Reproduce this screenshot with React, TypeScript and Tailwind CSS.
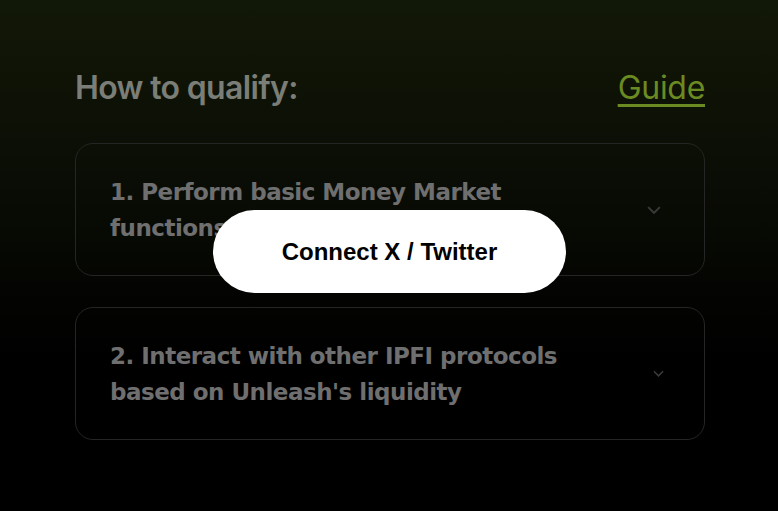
import React from "react";

const steps = [
  { text: "1. Perform basic Money Market functions", chevron: "w-[14px] h-[14px] mr-[3px]" },
  { text: "2. Interact with other IPFI protocols based on Unleash's liquidity", chevron: "w-[11px] h-[11px] mr-0" },
];

const Chevron: React.FC<{ className: string }> = ({ className }) => (
  <svg className={className} viewBox="0 0 12 12" fill="none" stroke="#3a3a3a" strokeWidth="1.7">
    <path d="M1 3.5 L6 8.5 L11 3.5" />
  </svg>
);

const App: React.FC = () => {
  return (
    <div className="relative w-[778px] h-[511px] overflow-hidden bg-[linear-gradient(180deg,#121807_0%,#0a0d05_35%,#000000_70%)]">
      <div className="pl-[75px] pr-[73px] pt-[66px] w-full">
        <div className="flex items-center justify-between h-[44px]">
          <h2 className="text-[32px] tracking-[-0.65px] text-[#7b7e76] font-['Inter',sans-serif] font-semibold">How to qualify:</h2>
          <a className="text-[32px] tracking-[-0.3px] text-[#6b8b22] underline underline-offset-[5px] decoration-[3px] font-['Inter',sans-serif]" href="#">Guide</a>
        </div>
        <div className="mt-[33px] flex flex-col gap-[31px]">
          {steps.map((s) => (
            <div key={s.text} className="flex items-center justify-between h-[133px] border border-[#252525] rounded-[18px] pl-[34px] pr-[40px]">
              <p className="w-[480px] text-[23px] leading-[36px] font-bold text-[#6f6f6f] font-['DejaVu_Sans',sans-serif] tracking-[-0.5px]">{s.text}</p>
              <Chevron className={s.chevron} />
            </div>
          ))}
        </div>
      </div>
      <button className="absolute left-[213px] top-[210px] w-[353px] h-[83px] rounded-full bg-white text-black text-[24px] font-bold font-['Liberation_Sans',Arial,sans-serif]">
        Connect X / Twitter
      </button>
    </div>
  );
};

export default App;
